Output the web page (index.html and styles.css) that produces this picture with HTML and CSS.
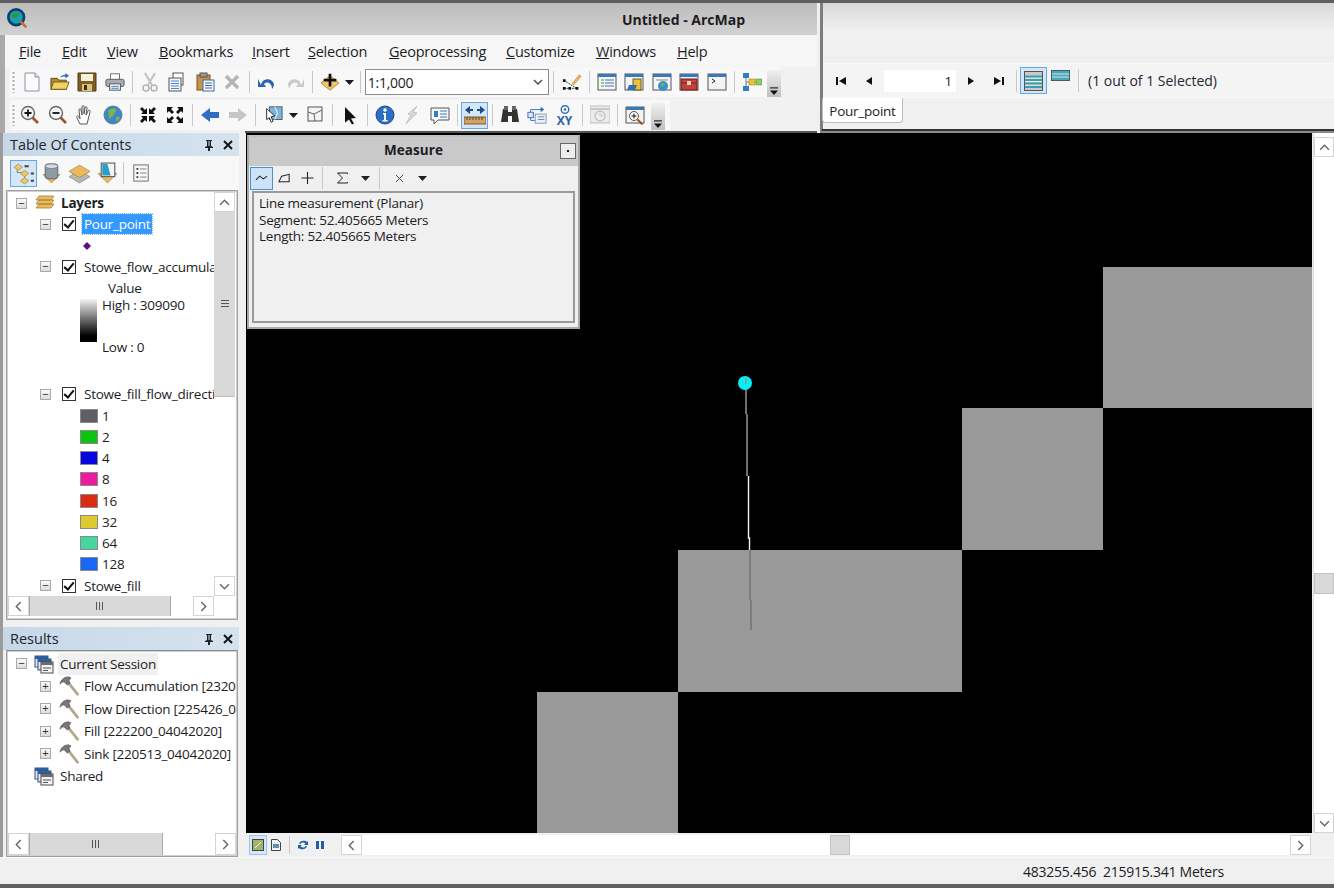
FILE: index.html
```html
<!DOCTYPE html>
<html>
<head>
    <title>Untitled - ArcMap</title>
    <link rel="stylesheet" href="styles.css">
</head>
<body>
    <svg class="defs" width="0" height="0">
        <symbol id="i-window" viewBox="0 0 20 20"><rect x="1" y="2" width="18" height="16" fill="#f4f4f4" stroke="#555"/><rect x="1" y="2" width="18" height="3" fill="#3c78b8"/></symbol>
        <symbol id="i-hammer" viewBox="0 0 24 24"><path d="M10 8l11 14" stroke="#b3a78f" stroke-width="3" fill="none"/><path d="M1 10c1-5 5-8 9-8l3 1-2 3 1 3-3 2-3-3c-2-1-3 0-5 2z" fill="#77777a" stroke="#444" stroke-width=".6"/></symbol>
        <symbol id="i-session" viewBox="0 0 20 20"><rect x="1" y="2" width="13" height="11" fill="#dfe6ee" stroke="#32557f"/><rect x="1" y="2" width="13" height="3" fill="#2e5f9e"/><rect x="4" y="5" width="13" height="11" fill="#e6e9ee" stroke="#32557f"/><rect x="4" y="5" width="13" height="3" fill="#2e5f9e"/><rect x="7" y="8" width="12" height="11" fill="#f4f4f4" stroke="#4a4a4a"/><rect x="7" y="8" width="12" height="3" fill="#6b6b6b"/><path d="M9 14h8M9 16.500h5" stroke="#555"/></symbol>
        <symbol id="i-caret" viewBox="0 0 9 5"><path d="M0 0h9L4.500 5z" fill="#1a1a1a"/></symbol>
    </svg>

    <div class="app">
        <div class="top">
            <div class="main-head">
                <div class="title-bar">
                    <svg class="logo" viewBox="0 0 24 24"><circle cx="10.500" cy="10.500" r="9" fill="#17a0a8" stroke="#0e3f6e" stroke-width="3"/><path d="M5 9c3-4 7-4 9-2-2 1-2 3-4 4-2 0-3 1-5-2z" fill="#3b8f3a"/><path d="M15 15l7 7" stroke="#c0703a" stroke-width="3"/></svg>
                    <span class="title-text">Untitled - ArcMap</span>
                </div>
                <div class="menu-bar">
                    <span class="menu-item m-file"><u>F</u>ile</span>
                    <span class="menu-item m-edit"><u>E</u>dit</span>
                    <span class="menu-item m-view"><u>V</u>iew</span>
                    <span class="menu-item m-book"><u>B</u>ookmarks</span>
                    <span class="menu-item m-insert"><u>I</u>nsert</span>
                    <span class="menu-item m-sel"><u>S</u>election</span>
                    <span class="menu-item m-geo"><u>G</u>eoprocessing</span>
                    <span class="menu-item m-cust"><u>C</u>ustomize</span>
                    <span class="menu-item m-win"><u>W</u>indows</span>
                    <span class="menu-item m-help"><u>H</u>elp</span>
                </div>

                <div class="toolbar row-one">
                    <span class="grip"></span>
                    <span class="tool"><svg viewBox="0 0 20 20"><path d="M3 1h10l4 4v14H3z" fill="#fbfbfd" stroke="#8a93a3"/><path d="M13 1v4h4" fill="#dde3ec" stroke="#8a93a3"/></svg></span>
                    <span class="tool"><svg viewBox="0 0 22 20"><path d="M1 6h7l2 2h8v10H1z" fill="#b08c26" stroke="#5d4a12"/><path d="M1 18l3-8h17l-3 8z" fill="#f1d163" stroke="#6e5a18"/><path d="M11 5c1-2 3-3 6-3V0l4 3-4 3V4c-2 0-4 0-6 1z" fill="#2f6fbd"/></svg></span>
                    <span class="tool"><svg viewBox="0 0 20 20"><path d="M1 1h18v18H1z" fill="#7e5f22" stroke="#4f3b12"/><rect x="4" y="2" width="12" height="7" fill="#f4f0dc"/><rect x="5" y="12" width="10" height="7" fill="#d7c384"/><rect x="7" y="13" width="3" height="5" fill="#3d2e0d"/></svg></span>
                    <span class="tool"><svg viewBox="0 0 22 20"><rect x="6" y="1" width="10" height="7" fill="#fff" stroke="#666"/><rect x="1" y="7" width="20" height="8" rx="2" fill="#a9adb2" stroke="#555"/><rect x="5" y="12" width="12" height="7" fill="#dfe9f6" stroke="#555"/><path d="M7 15h8M7 17h8" stroke="#5d85b9"/></svg></span>
                    <span class="sep"></span>
                    <span class="tool"><svg viewBox="0 0 20 20"><path d="M5 1l7 12M15 1L8 13" stroke="#c2c2c2" stroke-width="2" fill="none"/><circle cx="6" cy="16" r="3" fill="none" stroke="#b4b4b4" stroke-width="1.600"/><circle cx="14" cy="16" r="3" fill="none" stroke="#b4b4b4" stroke-width="1.600"/></svg></span>
                    <span class="tool"><svg viewBox="0 0 20 20"><rect x="6" y="1" width="10" height="12" fill="#fff" stroke="#555"/><rect x="2" y="6" width="12" height="13" fill="#f3f6fb" stroke="#555"/><path d="M4 9h8M4 11.500h8M4 14h8M4 16.500h8" stroke="#4f86c6"/></svg></span>
                    <span class="tool"><svg viewBox="0 0 20 20"><rect x="2" y="3" width="13" height="15" fill="#c9924c" stroke="#7a5320"/><rect x="5" y="1" width="7" height="4" fill="#9a9a9a" stroke="#555"/><rect x="8" y="8" width="11" height="11" fill="#f4f7fc" stroke="#3d6aa5"/><path d="M10 11h7M10 13.500h7M10 16h7" stroke="#3d6aa5"/></svg></span>
                    <span class="tool"><svg viewBox="0 0 20 20"><path d="M4 4l12 12M16 4L4 16" stroke="#b5b5b5" stroke-width="3.400"/></svg></span>
                    <span class="sep"></span>
                    <span class="tool"><svg viewBox="0 0 20 20"><path d="M4 13C5 6 15 5 17 12c0 2-1 4-2 5 0-6-5-8-8-5l2 3H1V7z" fill="#2e63ad"/></svg></span>
                    <span class="tool"><svg viewBox="0 0 20 20"><path d="M16 13C15 6 5 5 3 12c0 2 1 4 2 5 0-6 5-8 8-5l-2 3h8V7z" fill="#c9c9c9"/></svg></span>
                    <span class="sep"></span>
                    <span class="tool tool-drop"><svg viewBox="0 0 22 20"><path d="M11 3l10 8-10 8-10-8z" fill="#f0c766" stroke="#b08a32"/><path d="M11 1v14M4 8h14" stroke="#111" stroke-width="3"/></svg><svg class="caret"><use href="#i-caret"/></svg></span>
                    <span class="sep sep-tight"></span>
                    <div class="scale-box"><span>1:1,000</span><svg class="chev" viewBox="0 0 10 6"><path d="M1 1l4 4 4-4" fill="none" stroke="#555" stroke-width="1.600"/></svg></div>
                    <span class="sep sep-tight"></span>
                    <span class="tool"><svg viewBox="0 0 22 20"><path d="M11 12L19 2l2 2-8 9z" fill="#f0b95a" stroke="#a9762a" stroke-width=".6"/><path d="M2 8l6 4 8 5M2 17h14" stroke="#222" stroke-width="1" fill="none" stroke-dasharray="2 1"/><path d="M1 7h3v3H1zM7 15.500h3v3H7zM1 15.500h3v3H1zM15 15.500h3v3h-3z" fill="#111"/></svg></span>
                    <span class="sep"></span>
                    <span class="tool"><svg viewBox="0 0 20 20"><use href="#i-window"/><path d="M4 8h3M4 11h3M4 14h3" stroke="#2fa34a"/><path d="M8 8h9M8 11h9M8 14h9" stroke="#3c78b8"/></svg></span>
                    <span class="tool"><svg viewBox="0 0 20 20"><use href="#i-window"/><rect x="9" y="7" width="8" height="11" fill="#e9c236" stroke="#6e5a18"/><path d="M3 18l2-5h8l-2 5z" fill="#2f6fbd"/></svg></span>
                    <span class="tool"><svg viewBox="0 0 20 20"><use href="#i-window"/><path d="M4 8h12" stroke="#888"/><circle cx="11" cy="14" r="5" fill="#3c8fd0"/><path d="M8 12c2-2 4-1 5 0l-2 3z" fill="#6cb33f"/></svg></span>
                    <span class="tool"><svg viewBox="0 0 20 20"><use href="#i-window"/><rect x="2" y="7" width="16" height="11" fill="#c2413c" stroke="#6b1d1a"/><path d="M2 11h16" stroke="#7c2320"/><rect x="8" y="9" width="4" height="4" fill="#e9d4b0"/></svg></span>
                    <span class="tool"><svg viewBox="0 0 20 20"><use href="#i-window"/><path d="M5 7l3 2-3 2" fill="none" stroke="#222"/></svg></span>
                    <span class="sep"></span>
                    <span class="tool"><svg viewBox="0 0 20 20"><path d="M4 5v10M4 10h11" stroke="#777" fill="none"/><rect x="1" y="1" width="6" height="5" fill="#2f7ec6"/><rect x="1" y="14" width="6" height="5" fill="#2f7ec6"/><rect x="7" y="7" width="6" height="6" fill="#e9c236" stroke="#8a7420" stroke-width=".5"/><rect x="14" y="7" width="6" height="6" fill="#8ecb5a" stroke="#4f8a2c" stroke-width=".5"/></svg></span>
                    <span class="overflow"><svg viewBox="0 0 9 9"><path d="M0 1h9" stroke="#111" stroke-width="1.200"/><path d="M0 4h9L4.500 9z" fill="#111"/></svg></span>
                </div>

                <div class="toolbar row-two">
                    <span class="grip"></span>
                    <span class="tool"><svg viewBox="0 0 20 20"><path d="M12 12l6 6" stroke="#a0522d" stroke-width="2.600"/><circle cx="8" cy="8" r="6.500" fill="#f4f4f4" stroke="#666" stroke-width="1.400"/><path d="M8 4.500v7M4.500 8h7" stroke="#111" stroke-width="1.800"/></svg></span>
                    <span class="tool"><svg viewBox="0 0 20 20"><path d="M12 12l6 6" stroke="#a0522d" stroke-width="2.600"/><circle cx="8" cy="8" r="6.500" fill="#f4f4f4" stroke="#666" stroke-width="1.400"/><path d="M4.500 8h7" stroke="#111" stroke-width="1.800"/></svg></span>
                    <span class="tool"><svg viewBox="0 0 20 20"><path d="M5 19l-3-6c-1-2 1-3 2-1l1 2-1-9c0-2 2-2 2 0l1 5V2c0-2 2-2 2 0v7l1-6c0-2 2-2 2 0l-1 7 2-4c1-2 2-1 2 1l-2 8-1 4z" fill="#fff" stroke="#555" stroke-width="1"/></svg></span>
                    <span class="tool"><svg viewBox="0 0 20 20"><circle cx="10" cy="10" r="9" fill="#3e86c9" stroke="#5e7f99"/><path d="M5 6c3-3 6-3 8-2 1 2-1 3-2 5-1 3-3 3-4 5-2-1-1-4-2-8zM13 12c2-1 3 0 4 0-1 3-2 4-4 4z" fill="#7eb54a"/></svg></span>
                    <span class="sep"></span>
                    <span class="tool"><svg class="fixed" viewBox="0 0 18 18"><path d="M1 3l2-2 3 3 2-2v6H2l2-2zM17 3l-2-2-3 3-2-2v6h6l-2-2zM1 15l2 2 3-3 2 2v-6H2l2 2zM17 15l-2 2-3-3-2 2v-6h6l-2 2z" fill="#111"/></svg></span>
                    <span class="tool"><svg class="fixed" viewBox="0 0 18 18"><path d="M1 1h6L5 3l3 3-2 2-3-3-2 2zM17 1h-6l2 2-3 3 2 2 3-3 2 2zM1 17h6l-2-2 3-3-2-2-3 3-2-2zM17 17h-6l2-2-3-3 2-2 3 3 2-2z" fill="#111"/></svg></span>
                    <span class="sep"></span>
                    <span class="tool"><svg viewBox="0 0 20 20"><path d="M1 10l9-7v4h9v6h-9v4z" fill="#2e6fc4"/></svg></span>
                    <span class="tool"><svg viewBox="0 0 20 20"><path d="M19 10l-9-7v4H1v6h9v4z" fill="#c6c6c6"/></svg></span>
                    <span class="sep"></span>
                    <span class="tool tool-drop"><svg viewBox="0 0 22 20"><rect x="7" y="1" width="14" height="14" fill="#7cb6e0" stroke="#555"/><path d="M13 1l3 7-3 7" fill="none" stroke="#fff"/><path d="M4 3l9 8-4 1 2 5-2 1-2-5-3 2z" fill="#fff" stroke="#222"/></svg><svg class="caret"><use href="#i-caret"/></svg></span>
                    <span class="tool"><svg viewBox="0 0 20 20"><rect x="3" y="2" width="14" height="14" fill="#f4f4f4" stroke="#555"/><path d="M3 7l6 2 1 7M9 9l8-4" fill="none" stroke="#666"/></svg></span>
                    <span class="sep"></span>
                    <span class="tool"><svg viewBox="0 0 20 20"><path d="M5 2l11 11-5 .5 3 5-2 1-3-5-4 3z" fill="#111"/></svg></span>
                    <span class="sep"></span>
                    <span class="tool"><svg viewBox="0 0 20 20"><circle cx="10" cy="10" r="9" fill="#2e6fc4" stroke="#1c4a8a"/><circle cx="10" cy="5" r="1.800" fill="#fff"/><path d="M8 8h3v7h1.500v1.500h-5V15H9V9.500H8z" fill="#fff"/></svg></span>
                    <span class="tool"><svg viewBox="0 0 20 20"><path d="M15 1L6 9l3 1-5 9 11-11-4-1z" fill="#d9d9d9" stroke="#c4c4c4"/></svg></span>
                    <span class="tool"><svg viewBox="0 0 20 20"><path d="M1 3h18v12H8l-4 4v-4H1z" fill="#f8f8f8" stroke="#555"/><rect x="4" y="6" width="4" height="6" fill="#2f7ec6"/><path d="M10 6h7M10 9h7M10 12h7" stroke="#2f7ec6"/></svg></span>
                    <span class="sep"></span>
                    <span class="tool tool-on"><svg viewBox="0 0 22 20"><path d="M1 5l5-4v3h3v2H6v3zM21 5l-5-4v3h-3v2h3v3z" fill="#1c4a8a"/><rect x="0" y="12" width="22" height="7" fill="#cda56a" stroke="#7c5b2a"/><path d="M3 12v3M6 12v3M9 12v3M12 12v3M15 12v3M18 12v3" stroke="#5c421c"/></svg></span>
                    <span class="sep"></span>
                    <span class="tool"><svg viewBox="0 0 20 20"><path d="M3 4h5v3h4V4h5l2 13h-7v-6H8v6H1z" fill="#333"/><rect x="4" y="1" width="4" height="4" fill="#666"/><rect x="12" y="1" width="4" height="4" fill="#666"/></svg></span>
                    <span class="tool"><svg viewBox="0 0 22 20"><path d="M4 4h13M4 4v12h5" stroke="#2f6fbd" fill="none"/><rect x="1" y="7" width="6" height="6" fill="#dbe8f6" stroke="#2f6fbd"/><rect x="9" y="9" width="12" height="10" fill="#eef3f9" stroke="#7c93ad"/><path d="M15 1l4 3-4 3z" fill="#2f6fbd"/><path d="M12 12h7M12 15h7" stroke="#5f7d9e"/></svg></span>
                    <span class="tool tool-xy"><svg viewBox="0 0 16 9"><circle cx="8" cy="4.500" r="3.800" fill="none" stroke="#2f6fbd" stroke-width="1.400"/><circle cx="8" cy="4.500" r="1.300" fill="#2f6fbd"/></svg><b>XY</b></span>
                    <span class="sep"></span>
                    <span class="tool"><svg viewBox="0 0 20 20"><rect x="0" y="1" width="20" height="17" fill="#ececec" stroke="#bcbcbc"/><path d="M0 4h20" stroke="#c9c9c9" stroke-width="2"/><circle cx="10" cy="11" r="5" fill="none" stroke="#c4c4c4" stroke-width="1.400"/><path d="M10 8v3h3" stroke="#c4c4c4" fill="none"/></svg></span>
                    <span class="sep"></span>
                    <span class="tool"><svg viewBox="0 0 20 20"><use href="#i-window"/><circle cx="9" cy="11" r="4.500" fill="#fff" stroke="#555"/><path d="M9 8.500v5M6.500 11h5" stroke="#111"/><path d="M12.500 14.500l5 5" stroke="#a0522d" stroke-width="2.200"/></svg></span>
                    <span class="overflow"><svg viewBox="0 0 9 9"><path d="M0 1h9" stroke="#111" stroke-width="1.200"/><path d="M0 4h9L4.500 9z" fill="#111"/></svg></span>
                </div>
            </div>

            <div class="table-head">
                <div class="table-blank"></div>
                <div class="table-bar">
                    <span class="nav"><svg viewBox="0 0 10 10"><path d="M0 1h2v8H0zM10 1v8L3 5z" fill="#111"/></svg></span>
                    <span class="nav"><svg viewBox="0 0 10 10"><path d="M8 1v8L2 5z" fill="#111"/></svg></span>
                    <span class="record">1</span>
                    <span class="nav nav-next"><svg viewBox="0 0 10 10"><path d="M2 1v8l6-4z" fill="#111"/></svg></span>
                    <span class="nav"><svg viewBox="0 0 10 10"><path d="M0 1v8l7-4zM8 1h2v8H8z" fill="#111"/></svg></span>
                    <span class="sep sep-table"></span>
                    <span class="view-on"><svg viewBox="0 0 19 20"><rect x=".5" y=".5" width="18" height="19" fill="#c9c9c9" stroke="#555"/><path d="M1 7h17M1 10.500h17M1 14h17" stroke="#e8f4f4" stroke-width="1.200"/><path d="M1 5.500h17M1 9h17M1 12.500h17M1 16h17" stroke="#3f9fb0" stroke-width="2"/></svg></span>
                    <span class="view-off"><svg viewBox="0 0 19 12"><rect x=".5" y=".5" width="18" height="10" fill="#46a8b8" stroke="#4a5a60"/><path d="M1 4h17M1 7h17" stroke="#cfe9ee"/></svg></span>
                    <span class="sep sep-table2"></span>
                    <span class="selected-count">(1 out of 1 Selected)</span>
                </div>
                <div class="tab-row"><span class="tab">Pour_point</span></div>
            </div>
        </div>

        <div class="middle">
            <div class="side">
                <div class="dock toc">
                    <div class="dock-title"><span>Table Of Contents</span>
                        <svg class="pin" viewBox="0 0 10 12"><path d="M2 1h6v1H7v5l2 1v1H6v3H4V9H1V8l2-1V2H2zM4.500 2v5h1V2z" fill="#222"/></svg>
                        <svg class="close" viewBox="0 0 10 10"><path d="M1 1l8 8M9 1L1 9" stroke="#111" stroke-width="1.900"/></svg>
                    </div>
                    <div class="toc-tools">
                        <span class="toc-tool on"><svg viewBox="0 0 22 22"><path d="M5 6v4h5M12 11v6" stroke="#888" fill="none"/><path d="M6 2l4 3-4 3-4-3zM12 8l4 3-4 3-4-3zM12 15l4 3-4 3-4-3z" fill="#f0c766" stroke="#a98a3c" stroke-width=".7"/><path d="M12 4h4M18 11h3M18 18h3" stroke="#444" stroke-width="2"/></svg></span>
                        <span class="toc-tool"><svg viewBox="0 0 22 22"><path d="M3 12l8 8 8-8z" fill="#eab95c" stroke="#a9813a" stroke-width=".7"/><rect x="5" y="2" width="12" height="14" rx="3" fill="#8f9aa5" stroke="#5d6872"/><ellipse cx="11" cy="4" rx="6" ry="2.200" fill="#d6dde2" stroke="#5d6872" stroke-width=".6"/></svg></span>
                        <span class="toc-tool"><svg viewBox="0 0 22 22"><path d="M11 8l10 6-10 6-10-6z" fill="#b7b7b7" stroke="#8b8b8b" stroke-width=".7"/><path d="M11 3l10 6-10 6-10-6z" fill="#eab95c" stroke="#a9813a" stroke-width=".7"/></svg></span>
                        <span class="toc-tool"><svg viewBox="0 0 22 22"><path d="M2 11l9 9 9-9z" fill="#eab95c" stroke="#a9813a" stroke-width=".7"/><rect x="5" y="1" width="13" height="13" fill="#f4f4f4" stroke="#555"/><path d="M6 2h5l3 11H6z" fill="#2f9fc9"/></svg></span>
                        <span class="sep sep-toc"></span>
                        <span class="toc-tool"><svg viewBox="0 0 20 20"><rect x="2" y="1" width="16" height="18" fill="#f4f6f8" stroke="#666"/><path d="M5 5.500h2M5 10h2M5 14.500h2" stroke="#333" stroke-width="2"/><path d="M9 5.500h7M9 10h7M9 14.500h7" stroke="#777"/></svg></span>
                    </div>
                    <div class="pane toc-pane">
                        <div class="tree">
                            <div class="row lvl0"><span class="box">&minus;</span><svg class="layers-ico" viewBox="0 0 20 16"><path d="M4 1h15l-3 4H1zM4 5h15l-3 4H1zM4 9h15l-3 4H1z" fill="#e9bb63" stroke="#a97f33" stroke-width=".8"/></svg><b>Layers</b></div>
                            <div class="row lvl1"><span class="box">&minus;</span><span class="check"></span><span class="name picked">Pour_point</span></div>
                            <div class="row lvl2"><svg class="marker" viewBox="0 0 8 8"><path d="M4 0l4 4-4 4-4-4z" fill="#5c0f86"/></svg></div>
                            <div class="row lvl1"><span class="box">&minus;</span><span class="check"></span><span class="name">Stowe_flow_accumulation</span></div>
                            <div class="row value-row">Value</div>
                            <div class="ramp-row">
                                <div class="ramp"></div>
                                <div class="ramp-labels"><span>High : 309090</span><span>Low : 0</span></div>
                            </div>
                            <div class="row lvl1"><span class="box">&minus;</span><span class="check"></span><span class="name">Stowe_fill_flow_direction</span></div>
                            <div class="row lvl2"><span class="swatch c1"></span>1</div>
                            <div class="row lvl2"><span class="swatch c2"></span>2</div>
                            <div class="row lvl2"><span class="swatch c4"></span>4</div>
                            <div class="row lvl2"><span class="swatch c8"></span>8</div>
                            <div class="row lvl2"><span class="swatch c16"></span>16</div>
                            <div class="row lvl2"><span class="swatch c32"></span>32</div>
                            <div class="row lvl2"><span class="swatch c64"></span>64</div>
                            <div class="row lvl2"><span class="swatch c128"></span>128</div>
                            <div class="row lvl1"><span class="box">&minus;</span><span class="check"></span><span class="name">Stowe_fill</span></div>
                        </div>
                        <div class="vscroll toc-v">
                            <span class="sb-btn"><svg viewBox="0 0 10 6"><path d="M1 5l4-4 4 4" fill="none" stroke="#666" stroke-width="1.300"/></svg></span>
                            <span class="thumb-v"><i></i></span>
                            <span class="sb-fill"></span>
                            <span class="sb-btn"><svg viewBox="0 0 10 6"><path d="M1 1l4 4 4-4" fill="none" stroke="#666" stroke-width="1.300"/></svg></span>
                        </div>
                        <div class="hscroll toc-h">
                            <span class="sb-btn"><svg viewBox="0 0 6 10"><path d="M5 1L1 5l4 4" fill="none" stroke="#666" stroke-width="1.300"/></svg></span>
                            <span class="thumb-h"><i></i></span>
                            <span class="sb-fill"></span>
                            <span class="sb-btn"><svg viewBox="0 0 6 10"><path d="M1 1l4 4-4 4" fill="none" stroke="#666" stroke-width="1.300"/></svg></span>
                        </div>
                    </div>
                </div>

                <div class="dock results">
                    <div class="dock-title"><span>Results</span>
                        <svg class="pin" viewBox="0 0 10 12"><path d="M2 1h6v1H7v5l2 1v1H6v3H4V9H1V8l2-1V2H2zM4.500 2v5h1V2z" fill="#222"/></svg>
                        <svg class="close" viewBox="0 0 10 10"><path d="M1 1l8 8M9 1L1 9" stroke="#111" stroke-width="1.900"/></svg>
                    </div>
                    <div class="pane results-pane">
                        <div class="tree">
                            <div class="rrow lvl0"><span class="box">&minus;</span><svg class="session-ico"><use href="#i-session"/></svg><span class="session-name">Current Session</span></div>
                            <div class="rrow lvl1"><span class="box">+</span><svg class="hammer"><use href="#i-hammer"/></svg><span class="name">Flow Accumulation [232000_04042020]</span></div>
                            <div class="rrow lvl1"><span class="box">+</span><svg class="hammer"><use href="#i-hammer"/></svg><span class="name">Flow Direction [225426_04042020]</span></div>
                            <div class="rrow lvl1"><span class="box">+</span><svg class="hammer"><use href="#i-hammer"/></svg><span class="name">Fill [222200_04042020]</span></div>
                            <div class="rrow lvl1"><span class="box">+</span><svg class="hammer"><use href="#i-hammer"/></svg><span class="name">Sink [220513_04042020]</span></div>
                            <div class="rrow lvl0 no-box"><svg class="session-ico"><use href="#i-session"/></svg><span class="session-name">Shared</span></div>
                        </div>
                        <div class="hscroll res-h">
                            <span class="sb-btn"><svg viewBox="0 0 6 10"><path d="M5 1L1 5l4 4" fill="none" stroke="#666" stroke-width="1.300"/></svg></span>
                            <span class="thumb-h"><i></i></span>
                            <span class="sb-fill"></span>
                            <span class="sb-btn"><svg viewBox="0 0 6 10"><path d="M1 1l4 4-4 4" fill="none" stroke="#666" stroke-width="1.300"/></svg></span>
                        </div>
                    </div>
                </div>
            </div>

            <div class="map-area">
                <div class="map">
                    <svg class="map-art" viewBox="0 0 1066 700" width="1066" height="700">
                        <g fill="#999">
                            <rect x="857" y="134" width="209" height="141"/>
                            <rect x="716" y="275" width="141" height="142"/>
                            <rect x="432" y="417" width="284" height="142"/>
                            <rect x="291" y="559" width="141" height="141"/>
                        </g>
                        <g fill="none" stroke-width="1.400">
                            <path d="M500 250V281" stroke="#a0a0a0"/>
                            <path d="M501 281V343" stroke="#a0a0a0"/>
                            <path d="M502.500 343V405h1V417" stroke="#f4f4f4"/>
                            <path d="M504 417V467" stroke="#707070"/>
                            <path d="M505 467V497" stroke="#707070"/>
                        </g>
                        <circle cx="499" cy="250" r="7" fill="#00f0f5"/>
                        <rect x="499" y="245" width="1.500" height="6" fill="#a08a8a"/>
                    </svg>

                    <div class="measure">
                        <div class="measure-title"><b>Measure</b><span class="m-min"></span></div>
                        <div class="measure-tools">
                            <span class="mt on"><svg viewBox="0 0 14 8"><path d="M1 6l4-4 4 3 4-3" fill="none" stroke="#222" stroke-width="1.100"/></svg></span>
                            <span class="mt"><svg viewBox="0 0 14 10"><path d="M1 9l3-6 8-2v8z" fill="none" stroke="#222" stroke-width="1.100"/></svg></span>
                            <span class="mt"><svg viewBox="0 0 12 12"><path d="M6 0v12M0 6h12" stroke="#222" stroke-width="1.100"/></svg></span>
                            <span class="sep sep-m"></span>
                            <span class="mt mt-gap"><svg viewBox="0 0 12 12"><path d="M11 2V1H1l5 5-5 5h10v-1" fill="none" stroke="#222"/></svg></span>
                            <span class="mt"><svg class="m-caret" viewBox="0 0 9 5"><path d="M0 0h9L4.500 5z" fill="#222"/></svg></span>
                            <span class="sep sep-m"></span>
                            <span class="mt mt-gap"><svg class="m-cross" viewBox="0 0 10 10"><path d="M1 1l8 8M9 1L1 9" stroke="#444" stroke-width="1.100"/></svg></span>
                            <span class="mt"><svg class="m-caret" viewBox="0 0 9 5"><path d="M0 0h9L4.500 5z" fill="#222"/></svg></span>
                        </div>
                        <div class="measure-text">
                            <div>Line measurement (Planar)</div>
                            <div>Segment: 52.405665 Meters</div>
                            <div>Length: 52.405665 Meters</div>
                        </div>
                    </div>
                </div>

                <div class="vscroll map-v">
                    <span class="sb-btn"><svg viewBox="0 0 10 6"><path d="M1 5l4-4 4 4" fill="none" stroke="#666" stroke-width="1.300"/></svg></span>
                    <span class="map-v-top"></span>
                    <span class="thumb-plain"></span>
                    <span class="sb-fill"></span>
                    <span class="sb-btn"><svg viewBox="0 0 10 6"><path d="M1 1l4 4 4-4" fill="none" stroke="#666" stroke-width="1.300"/></svg></span>
                </div>

                <div class="map-foot">
                    <span class="view-btn on"><svg viewBox="0 0 12 12"><rect x=".5" y=".5" width="11" height="11" fill="#a3b36c" stroke="#444"/><path d="M3 9l6-6" stroke="#f0f0f0"/></svg></span>
                    <span class="view-btn"><svg viewBox="0 0 10 12"><path d="M.5.500h6l3 3v8h-9z" fill="#f4f4f4" stroke="#444"/><rect x="2" y="5" width="6" height="4" fill="#5e8fc0"/></svg></span>
                    <span class="sep sep-foot"></span>
                    <span class="view-btn"><svg class="foot-ico" viewBox="0 0 12 12"><path d="M2 5c1-4 6-4 8-2l1-1v4H7l1.500-1.500C7 3 4 3 3.500 5zM10 7c-1 4-6 4-8 2l-1 1V6h4L3.500 7.500C5 9 8 9 8.500 7z" fill="#1d5fa8"/></svg></span>
                    <span class="view-btn"><svg class="foot-pause" viewBox="0 0 8 8"><path d="M0 0h3v8H0zM5 0h3v8H5z" fill="#1d5fa8"/></svg></span>
                    <div class="hscroll map-h">
                        <span class="sb-btn"><svg viewBox="0 0 6 10"><path d="M5 1L1 5l4 4" fill="none" stroke="#666" stroke-width="1.300"/></svg></span>
                        <span class="sb-lead"></span>
                        <span class="thumb-plain-h"></span>
                        <span class="sb-fill"></span>
                        <span class="sb-btn"><svg viewBox="0 0 6 10"><path d="M1 1l4 4-4 4" fill="none" stroke="#666" stroke-width="1.300"/></svg></span>
                    </div>
                </div>
            </div>
        </div>

        <div class="status-bar"><span class="coords">483255.456&nbsp; 215915.341 Meters</span></div>
    </div>
</body>
</html>
```

FILE: styles.css
```css
html, body {
    margin: 0;
    height: 100%;
    overflow: hidden;
}

body {
    font-family: "Open Sans", "Noto Sans", sans-serif;
    font-size: 13.5px;
    letter-spacing: -0.25px;
    color: #1c1c24;
    background-color: #f0f0f0;
}

.defs {
    position: absolute;
}

.app {
    width: 1334px;
    height: 888px;
    box-sizing: border-box;
    border-top: 3px solid #5f5f5f;
    border-bottom: 4px solid #5f5f5f;
    display: flex;
    flex-direction: column;
}

/* top area */
.top {
    height: 130px;
    display: flex;
    flex: none;
}

.main-head {
    width: 817px;
    flex: none;
    box-sizing: border-box;
    border-left: 5px solid #a9a9a9;
    background-color: #f1f1f1;
}

.title-bar {
    height: 32px;
    margin-left: -5px;
    background: linear-gradient(#bcbcbc, #d2d2d2);
    position: relative;
    display: flex;
    align-items: center;
    justify-content: flex-end;
    padding-right: 72px;
}

.logo {
    position: absolute;
    left: 7px;
    top: 5px;
    width: 21px;
    height: 21px;
}

.title-text {
    font-weight: 700;
    font-size: 14px;
    letter-spacing: 0;
}

.menu-bar {
    height: 32px;
    box-sizing: border-box;
    display: flex;
    align-items: center;
    background-color: #f6f6f7;
    font-size: 14.5px;
}

.menu-item {
    flex: none;
}

.m-file { margin-left: 14px; width: 43px; }
.m-edit { width: 45px; }
.m-view { width: 52px; }
.m-book { width: 93px; }
.m-insert { width: 56px; }
.m-sel { width: 81px; }
.m-geo { width: 117px; }
.m-cust { width: 90px; }
.m-win { width: 81px; }

.toolbar {
    display: flex;
    align-items: center;
    background-color: #f8f8f8;
    margin-left: 5px;
    height: 30px;
    box-sizing: border-box;
}

.row-one {
    width: 771px;
}

.row-two {
    width: 660px;
    margin-top: 3px;
}

.grip {
    width: 3px;
    height: 22px;
    margin: 0 0 0 2px;
    background-image: radial-gradient(circle, #a8a8a8 1px, transparent 1.2px);
    background-size: 3px 4px;
    flex: none;
}

.row-one .grip {
    margin-right: 3.25px;
}

.row-two .grip {
    margin-right: 1.25px;
}

.tool {
    width: 27.5px;
    height: 27px;
    flex: none;
    display: flex;
    align-items: center;
    justify-content: center;
    box-sizing: border-box;
}

.tool > svg {
    width: 20px;
    height: 20px;
}

.tool > svg.fixed {
    width: 18px;
    height: 18px;
}

.tool-drop {
    width: 42px;
    justify-content: flex-start;
    padding-left: 4px;
    gap: 6px;
}

.row-one .tool-drop {
    width: 40px;
    gap: 5px;
}

.tool-drop > svg.caret {
    width: 9px;
    height: 5px;
}

.tool-on {
    border: 1px solid #66a7e8;
    background-color: #d5e6f8;
}

.tool-on > svg {
    width: 22px;
    height: 20px;
}

.tool-xy {
    flex-direction: column;
    color: #2a62a8;
    font-size: 12px;
    line-height: 11px;
    letter-spacing: 0;
}

.tool-xy > svg {
    width: 16px;
    height: 11px;
}

.sep {
    width: 7.5px;
    flex: none;
    height: 22px;
    background: linear-gradient(#c9c9c9, #c9c9c9) center / 1px 100% no-repeat;
}

.sep-tight {
    width: 9px;
}

.scale-box {
    width: 184px;
    height: 26px;
    flex: none;
    box-sizing: border-box;
    border: 1px solid #8c8c8c;
    background-color: #fff;
    display: flex;
    align-items: center;
    justify-content: space-between;
    padding: 0 5px 0 2px;
    font-size: 14px;
}

.chev {
    width: 10px;
    height: 6px;
}

.overflow {
    width: 14px;
    height: 27px;
    margin-left: 2px;
    margin-top: 3px;
    flex: none;
    background: linear-gradient(#f0f0f0, #c0c0c0);
    display: flex;
    align-items: flex-end;
    justify-content: center;
    padding-bottom: 2px;
    box-sizing: border-box;
}

.row-two .overflow {
    margin-left: 3px;
}

.overflow svg {
    width: 8px;
    height: 8px;
}

/* table window header */
.table-head {
    flex: 1;
    margin-left: 3px;
    box-sizing: border-box;
    border-left: 3px solid #7d7d7d;
    display: flex;
    flex-direction: column;
    background-color: #f0f0f0;
}

.table-blank {
    height: 60px;
    background: linear-gradient(#d8d8d8, #f0f0f0 45%);
    border-bottom: 1px solid #fafafa;
}

.table-bar {
    height: 33px;
    display: flex;
    align-items: center;
    background-color: #f4f4f4;
    border-bottom: 1px solid #fafafa;
    padding-left: 4px;
}

.nav {
    width: 28px;
    display: flex;
    justify-content: center;
    flex: none;
}

.nav svg {
    width: 10px;
    height: 10px;
}

.record {
    width: 72px;
    height: 22px;
    line-height: 22px;
    background-color: #fff;
    text-align: right;
    box-sizing: border-box;
    padding-right: 4px;
    flex: none;
    margin-left: 1px;
}

.nav-next {
    margin-left: 1px;
}

.sep-table {
    width: 7px;
}

.view-on {
    width: 27px;
    height: 27px;
    box-sizing: border-box;
    border: 1px solid #66a7e8;
    background-color: #d5e6f8;
    display: flex;
    align-items: center;
    justify-content: center;
    flex: none;
}

.view-on svg {
    width: 19px;
    height: 20px;
}

.view-off {
    width: 19px;
    height: 22px;
    margin-left: 4px;
    flex: none;
}

.view-off svg {
    width: 19px;
    height: 12px;
    display: block;
}

.sep-table2 {
    margin-left: 5px;
    width: 7px;
}

.selected-count {
    margin-left: 6px;
    font-size: 14px;
    letter-spacing: 0;
    color: #2a2433;
}

.tab-row {
    flex: 1;
    margin-left: -1px;
    box-shadow: inset 0 -2px 0 #8a8a8a;
    position: relative;
}

.tab-row::after {
    content: "";
    position: absolute;
    left: 0;
    right: 0;
    bottom: 2px;
    height: 2px;
    background-color: #333;
}

.tab {
    display: inline-block;
    height: 25px;
    line-height: 26px;
    box-sizing: border-box;
    width: 81px;
    text-align: center;
    background-color: #fff;
    border: 1px solid #bdbdbd;
    border-top: 0;
    border-radius: 0 0 4px 4px;
    font-size: 13.5px;
}

/* middle */
.middle {
    flex: 1;
    min-height: 0;
    display: flex;
    border-left: 3px solid #9a9a9a;
}

.side {
    width: 243px;
    flex: none;
    display: flex;
    flex-direction: column;
}

.dock {
    width: 236px;
    display: flex;
    flex-direction: column;
}

.toc {
    height: 489px;
}

.results {
    margin-top: 5px;
    height: 230px;
}

.dock-title {
    height: 23px;
    flex: none;
    display: flex;
    align-items: center;
    background: linear-gradient(90deg, #c6d8e8, #d5e3ef);
    padding-left: 7px;
    font-size: 14.5px;
    letter-spacing: 0;
}

.dock-title span {
    flex: 1;
    color: #20242c;
}

.pin {
    width: 10px;
    height: 12px;
    margin-right: 9px;
}

.close {
    width: 10px;
    height: 10px;
    margin-right: 6px;
}

.toc-tools {
    height: 34px;
    flex: none;
    display: flex;
    align-items: center;
    background-color: #f8f8f8;
    padding-left: 7px;
}

.toc-tool {
    width: 27px;
    height: 27px;
    box-sizing: border-box;
    flex: none;
    display: flex;
    align-items: center;
    justify-content: center;
    border: 1px solid transparent;
    margin-right: 1px;
}

.toc-tool svg {
    width: 23px;
    height: 23px;
}

.toc-tool.on {
    border-color: #66a7e8;
    background-color: #d5e6f8;
}

.sep-toc {
    width: 2px;
    margin-right: 3px;
}

.toc-tools .toc-tool:last-child svg {
    width: 18px;
    height: 18px;
}

.pane {
    flex: 1;
    min-height: 0;
    margin: 0 1px 0 3px;
    background-color: #fff;
    border: 1px solid #a0a0a0;
    box-shadow: inset 0 0 0 1px #d0d0d0;
    display: grid;
}

.toc-pane {
    margin-bottom: 2px;
    grid-template-columns: 206px 21px;
    grid-template-rows: 1fr 20px;
    padding: 1px 2px 3px 1px;
}

.results-pane {
    border-top: 1px solid #8c8c8c;
    grid-template-rows: 1fr 22px;
    padding: 0 1px 1px 1px;
}

.tree {
    overflow: hidden;
    padding-top: .5px;
    white-space: nowrap;
    min-width: 0;
}

.results-pane .tree {
    padding-top: 1.5px;
}

.row {
    height: 21.25px;
    display: flex;
    align-items: center;
    box-sizing: border-box;
}

.rrow {
    height: 22.5px;
    display: flex;
    align-items: center;
    box-sizing: border-box;
}

.lvl0 { padding-left: 8px; }
.lvl1 { padding-left: 32px; }
.lvl2 { padding-left: 72px; }

.box {
    width: 11px;
    height: 11px;
    flex: none;
    box-sizing: border-box;
    border: 1px solid #a9a9a9;
    background: linear-gradient(#fafafa, #dcdcdc);
    display: flex;
    align-items: center;
    justify-content: center;
    font-size: 11px;
    line-height: 9px;
    letter-spacing: 0;
    color: #333;
    font-family: "Liberation Sans", sans-serif;
}

.layers-ico {
    width: 20px;
    height: 16px;
    margin: 0 6px 0 8px;
    flex: none;
}

.check {
    width: 14px;
    height: 14px;
    flex: none;
    margin: 0 8px 0 11px;
    box-sizing: border-box;
    border: 1px solid #333;
    background-color: #fff;
    position: relative;
}

.check::after {
    content: "";
    position: absolute;
    left: 3px;
    top: 0;
    width: 4px;
    height: 8px;
    border: solid #111;
    border-width: 0 2px 2px 0;
    transform: rotate(40deg);
}

.name {
    flex: none;
}

.picked {
    background-color: #3399ff;
    color: #fff;
    height: 20px;
    line-height: 20px;
    padding: 0 2px;
    margin-left: -2px;
    outline: 1px dotted #8cc4ff;
}

.marker {
    width: 8px;
    height: 8px;
    margin-left: 3px;
}

.value-row {
    padding-left: 100px;
}

.ramp-row {
    height: 85px;
    display: flex;
    padding-left: 72px;
    box-sizing: border-box;
}

.ramp {
    width: 17px;
    height: 43px;
    background: linear-gradient(#f4f4f4, #000 85%);
    flex: none;
}

.ramp-labels {
    height: 60px;
    margin-left: 5px;
    margin-top: -3px;
    display: flex;
    flex-direction: column;
    justify-content: space-between;
}

.swatch {
    width: 18px;
    height: 14px;
    box-sizing: border-box;
    border: 1px solid #8a8a8a;
    margin-right: 4px;
    flex: none;
}

.c1 { background-color: #5f6066; }
.c2 { background-color: #0bc40f; }
.c4 { background-color: #0505e0; }
.c8 { background-color: #f01a9e; }
.c16 { background-color: #dd2a12; }
.c32 { background-color: #e0c92f; }
.c64 { background-color: #45d79c; }
.c128 { background-color: #1a66f5; }

/* scrollbars */
.vscroll {
    display: flex;
    flex-direction: column;
    background-color: #fff;
    min-height: 0;
}

.hscroll {
    display: flex;
    background-color: #fff;
    min-width: 0;
}

.toc-v {
    grid-row: 1;
    grid-column: 2;
}

.toc-h {
    grid-row: 2;
    grid-column: 1;
}

.res-h {
    grid-row: 2;
}

.sb-btn {
    flex: none;
    display: flex;
    align-items: center;
    justify-content: center;
    box-sizing: border-box;
    background-color: #fff;
    border: 1px solid #d4d4d4;
}

.vscroll .sb-btn {
    height: 20px;
}

.vscroll .sb-btn svg {
    width: 11px;
    height: 7px;
}

.hscroll .sb-btn {
    width: 21px;
}

.hscroll .sb-btn svg {
    width: 7px;
    height: 11px;
}

.sb-fill {
    flex: 1;
}

.sb-lead {
    width: 468px;
    flex: none;
}

.thumb-v {
    height: 184px;
    flex: none;
    background-color: #d9d9d9;
    border-bottom: 1px solid #bdbdbd;
    display: flex;
    align-items: center;
    justify-content: center;
}

.thumb-v i {
    width: 8px;
    height: 8px;
    background: repeating-linear-gradient(#555 0 1px, transparent 1px 3px);
}

.thumb-h {
    width: 142px;
    flex: none;
    background-color: #d9d9d9;
    border-left: 1px solid #a8a8a8;
    border-right: 1px solid #a8a8a8;
    box-sizing: border-box;
    display: flex;
    align-items: center;
    justify-content: center;
}

.res-h .thumb-h {
    width: 134px;
}

.thumb-h i {
    width: 8px;
    height: 8px;
    background: repeating-linear-gradient(90deg, #555 0 1px, transparent 1px 3px);
}

/* results */
.session-ico {
    width: 20px;
    height: 20px;
    margin: 0 6px 0 7px;
    flex: none;
}

.no-box {
    padding-left: 19px;
}

.session-name {
    padding: 2px;
    margin-left: -2px;
}

.rrow:first-child .session-name {
    background-color: #f0f0f0;
}

.hammer {
    width: 22px;
    height: 22px;
    margin: 0 3px 0 8px;
    flex: none;
}

/* map */
.map-area {
    flex: 1;
    display: grid;
    grid-template-columns: 1066px 22px;
    grid-template-rows: 700px 24px;
    min-width: 0;
}

.map {
    background-color: #000;
    position: relative;
}

.map::before {
    content: "";
    position: absolute;
    left: -1px;
    top: -2px;
    width: 572px;
    height: 2px;
    background-color: #555;
}

.map-art {
    display: block;
}

.measure {
    position: absolute;
    left: 1px;
    top: 2px;
    width: 333px;
    height: 194px;
    box-sizing: border-box;
    background-color: #f0f0f0;
    border: 2px solid #a8a8a8;
    border-top-color: #c0c0c0;
    display: flex;
    flex-direction: column;
}

.measure-title {
    height: 29px;
    flex: none;
    box-sizing: border-box;
    padding-bottom: 4px;
    background-color: #c9c9c9;
    display: flex;
    align-items: center;
    justify-content: center;
    position: relative;
    font-size: 13.5px;
    letter-spacing: .1px;
}

.m-min {
    position: absolute;
    right: 2px;
    top: 6px;
    width: 16px;
    height: 16px;
    box-sizing: border-box;
    border: 1px solid #666;
    background: radial-gradient(circle, #222 1.200px, #eee 1.600px);
}

.measure-tools {
    height: 24px;
    flex: none;
    display: flex;
    align-items: center;
    padding-left: 1px;
}

.mt {
    width: 23px;
    height: 23px;
    box-sizing: border-box;
    flex: none;
    display: flex;
    align-items: center;
    justify-content: center;
    border: 1px solid transparent;
}

.mt svg {
    width: 13px;
    height: 12px;
}

.mt svg.m-caret {
    width: 9px;
    height: 5px;
}

.mt svg.m-cross {
    width: 9px;
    height: 9px;
}

.mt.on {
    border-color: #4f8fd0;
    background-color: #cfe3f8;
}

.mt-gap {
    margin-left: 5.5px;
}

.sep-m {
    width: 6px;
}

.measure-text {
    flex: 1;
    margin: 1px 3px 4px;
    border: 2px solid #9a9a9a;
    padding: 2px 5px;
    line-height: 16.5px;
    font-size: 13.5px;
}

.map-v {
    border-left: 1px solid #dcdcdc;
    padding-top: 4px;
    box-sizing: border-box;
    margin-left: 1px;
}

.map-v-top {
    height: 416px;
    flex: none;
}

.thumb-plain {
    height: 21px;
    flex: none;
    background-color: #d9d9d9;
    border: 1px solid #c4c4c4;
    box-sizing: border-box;
}

.map-foot {
    grid-column: 1 / 3;
    display: flex;
    align-items: center;
    height: 22px;
    margin-top: 1px;
    background-color: #f0f0f0;
}

.view-btn {
    width: 17px;
    height: 20px;
    flex: none;
    display: flex;
    align-items: center;
    justify-content: center;
    box-sizing: border-box;
}

.view-btn svg {
    width: 12px;
    height: 12px;
}

.view-btn svg.foot-pause {
    width: 8px;
    height: 8px;
}

.view-btn.on {
    border: 1px solid #9cc7ef;
    background-color: #d5e6f8;
    margin-left: 3px;
    width: 18px;
}

.sep-foot {
    width: 10px;
    height: 18px;
}

.map-h {
    width: 970px;
    height: 20px;
    margin-left: 13px;
    flex: none;
}

.thumb-plain-h {
    width: 20px;
    flex: none;
    background-color: #d9d9d9;
    border: 1px solid #c4c4c4;
    box-sizing: border-box;
}

/* status */
.status-bar {
    height: 27px;
    flex: none;
    background-color: #f0f0f0;
    border-top: 1px solid #fafafa;
    box-sizing: border-box;
    display: flex;
    align-items: center;
    padding-left: 1023px;
    font-size: 14px;
}
```
